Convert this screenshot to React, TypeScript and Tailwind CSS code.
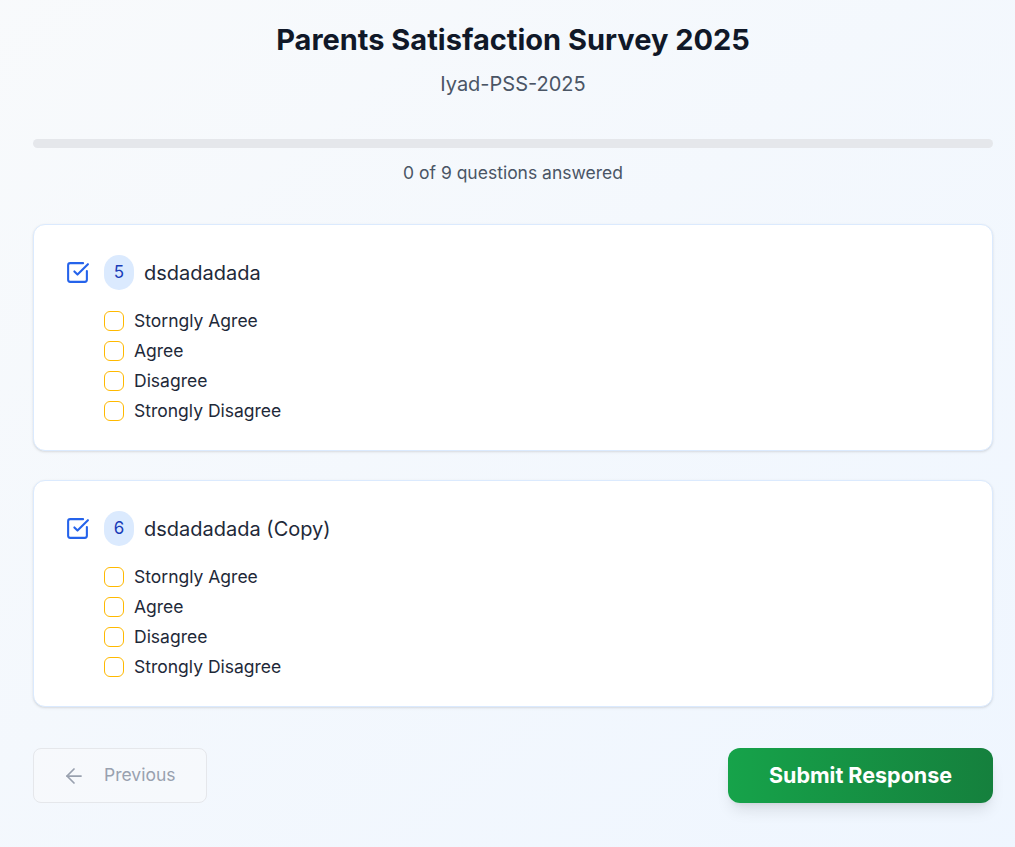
import { ArrowLeft, SquareCheckBig } from 'lucide-react';

const options = ['Storngly Agree', 'Agree', 'Disagree', 'Strongly Disagree'];

const questions = [
  { num: 5, text: 'dsdadadada' },
  { num: 6, text: 'dsdadadada (Copy)' },
];

function QuestionCard({ num, text }: { num: number; text: string }) {
  return (
    <div className="bg-white border border-blue-100 rounded-xl shadow-sm px-8 pt-[30px] pb-[24px]">
      <div className="flex items-center">
        <SquareCheckBig size={25} strokeWidth={2} className="text-[#2563eb] shrink-0 -ml-[1px]" />
        <span className="ml-[14px] w-[30px] h-[35px] rounded-full bg-blue-100 text-blue-800 text-[17px] flex items-center justify-center">
          {num}
        </span>
        <span className="ml-[10px] text-[20px] text-gray-800">{text}</span>
      </div>
      <div className="mt-[16px] ml-[38px] flex flex-col">
        {options.map((o) => (
          <label key={o} className="flex items-center h-[30px]">
            <span className="w-5 h-5 rounded-md border border-amber-400 bg-white" />
            <span className="ml-[10px] text-[17.5px] text-gray-800">{o}</span>
          </label>
        ))}
      </div>
    </div>
  );
}

export default function App() {
  return (
    <div
      className="min-h-screen bg-gradient-to-br from-slate-50 to-blue-50"
      style={{ fontFamily: 'Inter, "Noto Sans", sans-serif' }}
    >
      <div className="pl-[33px] pr-[22px] pt-[20px] pb-10">
        <div className="w-[960px]">
          <h1 className="text-center text-[29px] leading-10 font-bold text-gray-900">Parents Satisfaction Survey 2025</h1>
          <p className="text-center text-[20px] leading-7 text-gray-600 mt-[10px]">Iyad-PSS-2025</p>

          <div className="mt-[41px] h-[9px] rounded-full bg-gray-200" />
          <p className="text-center text-[17.5px] leading-6 text-gray-600 mt-[13px]">0 of 9 questions answered</p>

          <div className="mt-[39px] flex flex-col gap-[29px]">
            {questions.map((q) => (
              <QuestionCard key={q.num} num={q.num} text={q.text} />
            ))}
          </div>

          <div className="mt-[41px] flex items-center justify-between">
            <button className="w-[174px] h-[55px] rounded-lg border border-gray-200 bg-gray-50/60 flex items-center pl-[28px] text-gray-400">
              <ArrowLeft size={24} strokeWidth={1.75} className="text-gray-400" />
              <span className="ml-[18px] text-[17.5px]">Previous</span>
            </button>
            <button className="w-[265px] h-[55px] rounded-xl bg-gradient-to-r from-[#16a34a] to-[#15803d] text-white text-[21.5px] font-bold shadow-lg">
              Submit Response
            </button>
          </div>
        </div>
      </div>
    </div>
  );
}
